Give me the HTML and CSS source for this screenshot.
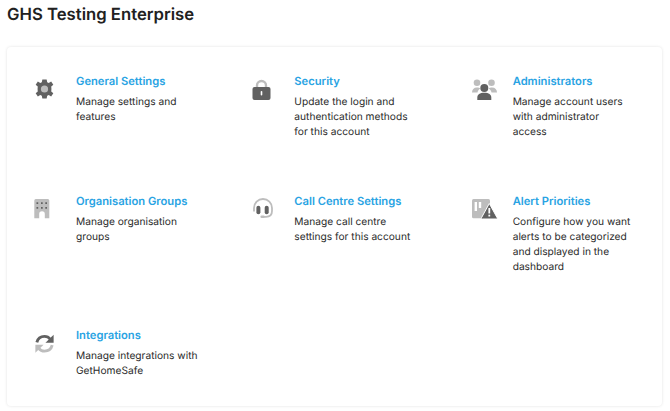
FILE: index.html
```html
<!DOCTYPE html>
<html lang="en">
<head>
<meta charset="utf-8">
<title>GHS Testing Enterprise</title>
<link rel="stylesheet" href="styles.css">
</head>
<body>
<h1 class="page-title">GHS Testing Enterprise</h1>
<main class="card">
  <a class="item" href="#">
    <svg class="icon" viewBox="0 0 24 24"><g transform="translate(0.7 1.200) scale(0.9)"><path class="dark" d="M9.600 1.500h4.800l.6 3 1.700.8 2.700-1.500 2.400 3.500-2.300 2 .2 2.700-.2 2.700 2.300 2-2.400 3.500-2.700-1.500-1.700.8-.6 3H9.600l-.6-3-1.700-.8-2.700 1.500-2.400-3.500 2.300-2-.2-2.700.2-2.700-2.300-2 2.400-3.500 2.700 1.500 1.700-.8z"/><circle class="light" cx="12" cy="12" r="4"/></g></svg>
    <div class="text"><h2 class="name">General Settings</h2><p class="desc">Manage settings and<br>features</p></div>
  </a>
  <a class="item" href="#">
    <svg class="icon" viewBox="0 0 24 24"><path class="stroke-light" d="M6 11V8.500a4.500 4.500 0 0 1 9 0V11" stroke-width="2.400"/><rect class="dark" x="1.500" y="10" width="18" height="13" rx="2"/><rect class="white" x="9.700" y="14" width="1.600" height="4.500" rx=".8"/></svg>
    <div class="text"><h2 class="name">Security</h2><p class="desc">Update the login and<br>authentication methods<br>for this account</p></div>
  </a>
  <a class="item" href="#">
    <svg class="icon" viewBox="0 0 24 24"><circle class="light" cx="7" cy="5.700" r="3.300"/><circle class="light" cx="21.500" cy="5.700" r="3.300"/><path class="light" d="M2 15.500c0-3 1.800-5 5-5 1.500 0 2.500.3 3.300 1-1.500 1-2.500 2.300-2.800 4z"/><path class="light" d="M27 15.500c0-3-1.800-5-5-5-1.500 0-2.500.3-3.300 1 1.500 1 2.500 2.300 2.800 4z"/><circle class="dark" cx="14.300" cy="11" r="4"/><path class="dark" d="M7.300 23v-2.300c0-3 2.500-4.900 7-4.900s7 1.900 7 4.900V23z"/></svg>
    <div class="text"><h2 class="name">Administrators</h2><p class="desc">Manage account users<br>with administrator<br>access</p></div>
  </a>
  <a class="item" href="#">
    <svg class="icon" viewBox="0 0 24 24"><path class="light" d="M2.800 2h12A1.500 1.500 0 0 1 16.300 3.500V21.300h-4.500V17a2.800 2.800 0 0 0-5.600 0v4.300H1.300V3.500A1.500 1.500 0 0 1 2.800 2z"/><path class="dark" d="M3.500 5.200h1.700v1.700H3.500zM8 5.200h1.700v1.700H8zM12.300 5.200H14v1.700h-1.700zM3.500 10h1.700v1.700H3.500zM8 10h1.700v1.700H8zM12.300 10H14v1.700h-1.700z"/></svg>
    <div class="text"><h2 class="name">Organisation Groups</h2><p class="desc">Manage organisation<br>groups</p></div>
  </a>
  <a class="item" href="#">
    <svg class="icon" viewBox="0 0 24 24"><path class="stroke-light" d="M3 14.500V11a9 9 0 0 1 18 0v3c0 3.500-2 5.800-6 5.800h-3" stroke-width="1.800"/><rect class="dark" x="5.400" y="8.700" width="4" height="8.600" rx="2"/><rect class="dark" x="13.700" y="8.700" width="4" height="8.600" rx="2"/><rect class="light" x="9.400" y="18.500" width="4.400" height="2.600" rx="1.300"/></svg>
    <div class="text"><h2 class="name">Call Centre Settings</h2><p class="desc">Manage call centre<br>settings for this account</p></div>
  </a>
  <a class="item" href="#">
    <svg class="icon" viewBox="0 0 24 24"><path class="light" d="M3.500 2h15A1.500 1.500 0 0 1 20 3.500V12l-6 9.300H3.500A1.500 1.500 0 0 1 2 19.800V3.500A1.500 1.500 0 0 1 3.500 2z"/><rect class="white" x="4.600" y="5" width="2.400" height="9"/><rect class="white" x="8.800" y="5" width="2.400" height="6"/><path class="dark halo" d="M19.300 6.500l7.800 14.200a.8.800 0 0 1-.7 1.300H12.200a.8.800 0 0 1-.7-1.300z"/><rect class="white" x="18.400" y="11" width="1.800" height="5.500"/><rect class="white" x="18.400" y="17.700" width="1.800" height="1.800"/></svg>
    <div class="text"><h2 class="name">Alert Priorities</h2><p class="desc">Configure how you want<br>alerts to be categorized<br>and displayed in the<br>dashboard</p></div>
  </a>
  <a class="item" href="#">
    <svg class="icon" viewBox="0 0 24 24"><g transform="translate(0 1.500) scale(0.96 0.94)"><path class="stroke-dark" d="M4 10.500C5 6.500 8.200 4.200 12 4.200c2.500 0 4.500 1 6 3" stroke-width="3"/><path class="dark" d="M21.500 2.500v8.500H13z"/><path class="stroke-light" d="M20 13.500c-1 4-4.200 6.300-8 6.300-2.500 0-4.500-1-6-3" stroke-width="3"/><path class="light" d="M2.500 21.500V13H11z"/></g></svg>
    <div class="text"><h2 class="name">Integrations</h2><p class="desc">Manage integrations with<br>GetHomeSafe</p></div>
  </a>
</main>
</body>
</html>
```
FILE: styles.css
```css
* { box-sizing: border-box; }
html, body { height: 411px; overflow: hidden; }
body {
  margin: 0;
  padding: 5px 8px 0 7px;
  background: #fff;
  font-family: Inter, "Liberation Sans", sans-serif;
  text-rendering: geometricPrecision;
}
.page-title {
  margin: 0 0 22px;
  font-size: 16.700px;
  line-height: 20px;
  font-weight: 600;
  color: #212121;
}
.card {
  display: grid;
  grid-template-columns: repeat(3, minmax(0, 1fr));
  grid-template-rows: 120px 134px 1fr;
  height: 359px;
  background: #fff;
  border-radius: 4px;
  box-shadow: 0 0 3px rgba(0, 0, 0, 0.12);
}
.item {
  display: flex;
  gap: 19px;
  padding: 27px 20px 0 26px;
  text-decoration: none;
}
.icon {
  flex: none;
  width: 24px;
  height: 24px;
  margin-top: 3px;
  overflow: visible;
}
.text { min-width: 0; }
.name {
  margin: 0 0 5.500px;
  font-size: 11.200px;
  line-height: 15px;
  font-weight: 600;
  color: #29a3e3;
}
.desc {
  margin: 0;
  font-size: 10.200px;
  line-height: 15.100px;
  color: #2b2b2b;
  white-space: nowrap;
}
.dark { fill: #616161; }
.light { fill: #bdbdbd; }
.white { fill: #fff; }
.halo { stroke: #fff; stroke-width: 1; }
.stroke-light { fill: none; stroke: #bdbdbd; }
.stroke-dark { fill: none; stroke: #616161; }
```
